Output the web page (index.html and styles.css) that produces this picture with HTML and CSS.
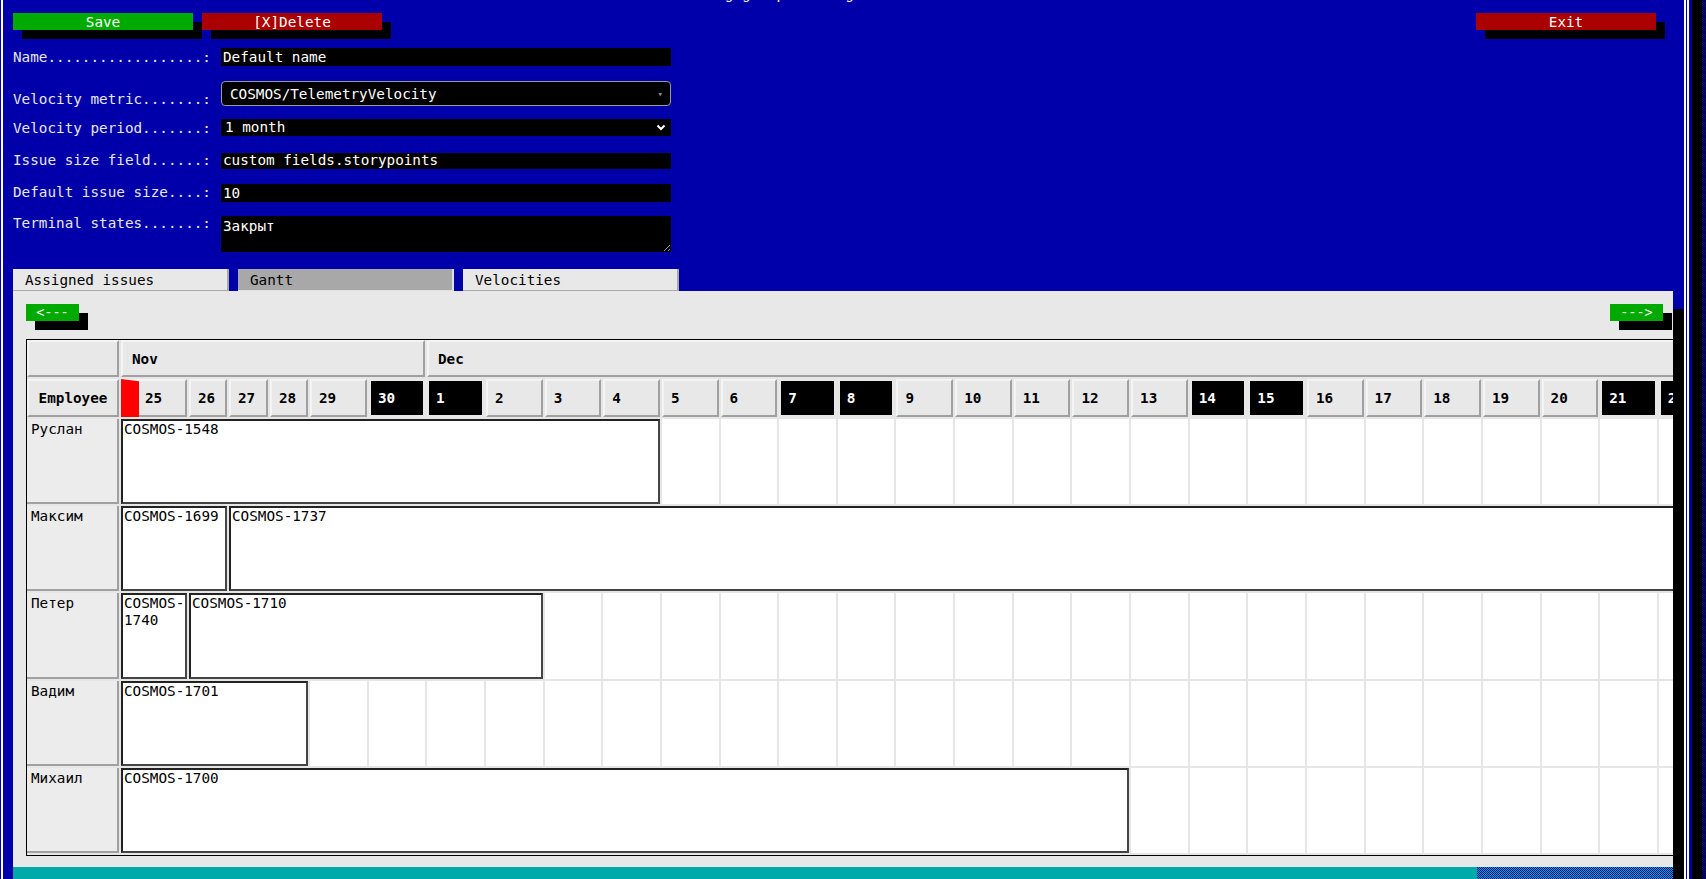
FILE: index.html
```html
<!DOCTYPE html>
<html lang="en">
<head>
<meta charset="utf-8">
<title>Planning group</title>
<link rel="stylesheet" href="styles.css">
</head>
<body>
<div class="desktop">
  <div class="window">
    <div class="frame">
      <div class="title">Planning group settings</div>
      <div class="toolbar">
        <button class="btn btn-green">Save</button>
        <button class="btn btn-red">[X]Delete</button>
        <button class="btn btn-red btn-exit">Exit</button>
      </div>
      <div class="form">
        <div class="field field-name">
          <label class="label">Name..................:</label>
          <input class="input" value="Default name">
        </div>
        <div class="field field-metric">
          <label class="label">Velocity metric.......:</label>
          <div class="select select-metric"><span>COSMOS/TelemetryVelocity</span><span class="tri">&#9662;</span></div>
        </div>
        <div class="field field-period">
          <label class="label">Velocity period.......:</label>
          <div class="select select-period"><span>1 month</span>
            <svg class="chev" width="10" height="7" viewBox="0 0 10 7"><path d="M1.5 1.5 L5 5 L8.5 1.5" fill="none" stroke="#fff" stroke-width="2"/></svg>
          </div>
        </div>
        <div class="field field-size">
          <label class="label">Issue size field......:</label>
          <input class="input input-size" value="custom fields.storypoints">
        </div>
        <div class="field field-default">
          <label class="label">Default issue size....:</label>
          <input class="input" value="10">
        </div>
        <div class="field field-terminal">
          <label class="label">Terminal states.......:</label>
          <textarea class="textarea">Закрыт</textarea>
        </div>
      </div>
      <div class="tabs">
        <div class="tab">Assigned issues</div>
        <div class="tab tab-active">Gantt</div>
        <div class="tab">Velocities</div>
      </div>
      <div class="panel">
        <div class="navrow">
          <button class="nav">&lt;---</button>
          <button class="nav">---&gt;</button>
        </div>
        <div class="gantt">
          <div class="th th-corner"></div>
          <div class="th month month-nov">Nov</div>
          <div class="th month month-dec">Dec</div>

          <div class="th th-emp">Employee</div>
          <div class="th day today"><span class="marker"></span><span class="num">25</span></div>
          <div class="th day">26</div>
          <div class="th day">27</div>
          <div class="th day">28</div>
          <div class="th day">29</div>
          <div class="th day wk">30</div>
          <div class="th day wk">1</div>
          <div class="th day">2</div>
          <div class="th day">3</div>
          <div class="th day">4</div>
          <div class="th day">5</div>
          <div class="th day">6</div>
          <div class="th day wk">7</div>
          <div class="th day wk">8</div>
          <div class="th day">9</div>
          <div class="th day">10</div>
          <div class="th day">11</div>
          <div class="th day">12</div>
          <div class="th day">13</div>
          <div class="th day wk">14</div>
          <div class="th day wk">15</div>
          <div class="th day">16</div>
          <div class="th day">17</div>
          <div class="th day">18</div>
          <div class="th day">19</div>
          <div class="th day">20</div>
          <div class="th day wk">21</div>
          <div class="th day wk">22</div>
          <div class="th day">23</div>
          <div class="th day">24</div>

          <div class="name">Руслан</div>
          <div class="task" style="grid-column: span 10">COSMOS-1548</div>
          <i class="cell"></i><i class="cell"></i><i class="cell"></i><i class="cell"></i><i class="cell"></i>
          <i class="cell"></i><i class="cell"></i><i class="cell"></i><i class="cell"></i><i class="cell"></i>
          <i class="cell"></i><i class="cell"></i><i class="cell"></i><i class="cell"></i><i class="cell"></i>
          <i class="cell"></i><i class="cell"></i><i class="cell"></i><i class="cell"></i><i class="cell"></i>

          <div class="name">Максим</div>
          <div class="task" style="grid-column: span 2">COSMOS-1699</div>
          <div class="task" style="grid-column: span 28">COSMOS-1737</div>

          <div class="name">Петер</div>
          <div class="task" style="grid-column: span 1">COSMOS-<wbr>1740</div>
          <div class="task" style="grid-column: span 7">COSMOS-1710</div>
          <i class="cell"></i><i class="cell"></i><i class="cell"></i><i class="cell"></i><i class="cell"></i>
          <i class="cell"></i><i class="cell"></i><i class="cell"></i><i class="cell"></i><i class="cell"></i>
          <i class="cell"></i><i class="cell"></i><i class="cell"></i><i class="cell"></i><i class="cell"></i>
          <i class="cell"></i><i class="cell"></i><i class="cell"></i><i class="cell"></i><i class="cell"></i>
          <i class="cell"></i><i class="cell"></i>

          <div class="name">Вадим</div>
          <div class="task" style="grid-column: span 4">COSMOS-1701</div>
          <i class="cell"></i><i class="cell"></i><i class="cell"></i><i class="cell"></i><i class="cell"></i>
          <i class="cell"></i><i class="cell"></i><i class="cell"></i><i class="cell"></i><i class="cell"></i>
          <i class="cell"></i><i class="cell"></i><i class="cell"></i><i class="cell"></i><i class="cell"></i>
          <i class="cell"></i><i class="cell"></i><i class="cell"></i><i class="cell"></i><i class="cell"></i>
          <i class="cell"></i><i class="cell"></i><i class="cell"></i><i class="cell"></i><i class="cell"></i>
          <i class="cell"></i>

          <div class="name">Михаил</div>
          <div class="task" style="grid-column: span 18">COSMOS-1700</div>
          <i class="cell"></i><i class="cell"></i><i class="cell"></i><i class="cell"></i><i class="cell"></i>
          <i class="cell"></i><i class="cell"></i><i class="cell"></i><i class="cell"></i><i class="cell"></i>
          <i class="cell"></i><i class="cell"></i>
        </div>
        <div class="hscroll"><div class="thumb"></div></div>
      </div>
    </div>
  </div>
</div>
</body>
</html>
```

FILE: styles.css
```css
html, body {
  margin: 0;
  padding: 0;
}
body {
  width: 1706px;
  height: 879px;
  overflow: hidden;
  background-color: #000;
  background-image: repeating-conic-gradient(#0000aa 0 25%, #000 0 50%);
  background-size: 2px 2px;
  font-family: "DejaVu Sans Mono", "Liberation Mono", monospace;
  font-size: 14.3px;
  line-height: 17px;
}
.desktop {
  display: flex;
  height: 879px;
  overflow: hidden;
}
.window {
  flex: none;
  width: 1697px;
  height: 930px;
  margin-left: -5px;
  margin-top: -11px;
  padding: 3px;
  box-sizing: border-box;
  background: #0000aa;
  box-shadow: 10px 10px 0 #000;
}
.frame {
  position: relative;
  height: 100%;
  box-sizing: border-box;
  border: 5px double #fff;
  padding: 0 11px 0 10px;
  display: flex;
  flex-direction: column;
}
.title {
  position: absolute;
  top: -11px;
  left: 0;
  right: 0;
  margin: 0 auto;
  width: max-content;
  padding: 0 8px;
  background: #0000aa;
  color: #fff;
  transform: translateX(-80px);
}
.toolbar {
  display: flex;
  margin-top: 16px;
  gap: 9px;
}
.btn {
  width: 180px;
  height: 17px;
  padding: 1px 0 0;
  border: 0;
  font: inherit;
  line-height: 17px;
  color: #fff;
  box-shadow: 9px 9px 0 #000;
}
.btn-green { background: #00aa00; }
.btn-red { background: #aa0000; }
.btn-exit {
  margin-left: auto;
  margin-right: 17px;
}
.form {
  display: flex;
  flex-direction: column;
}
.field {
  display: flex;
}
.label {
  width: 208px;
  flex: none;
  color: #e8e8e8;
  white-space: pre;
}
.input, .textarea {
  width: 450px;
  box-sizing: border-box;
  border: 0;
  margin: 0;
  background: #000;
  color: #fff;
  font: inherit;
  line-height: 17px;
  padding: 0 2px;
  outline: none;
}
.field-name { margin-top: 18px; align-items: center; }
.field-name .input { height: 18px; }
.field-metric { margin-top: 15px; align-items: flex-end; }
.field-metric .label { margin-bottom: -2px; }
.field-period { margin-top: 13px; align-items: center; }
.field-period .label {
  height: 17px;
  box-sizing: border-box;
  padding-top: 1px;
}
.field-size { margin-top: 16px; align-items: center; }
.field-size .input { height: 16px; }
.field-default { margin-top: 15px; align-items: center; }
.field-default .input { height: 18px; }
.field-default .label { margin-top: -1px; }
.field-terminal { margin-top: 14px; align-items: flex-start; }
.field-terminal .label { margin-top: -1px; }
.textarea {
  height: 36px;
  padding: 2px 2px;
  resize: vertical;
}
.select {
  width: 450px;
  box-sizing: border-box;
  display: flex;
  align-items: center;
  justify-content: space-between;
  background: #000;
  color: #fff;
}
.select-metric {
  height: 25px;
  border: 1px solid #9a9a9a;
  border-radius: 4px;
  padding: 1px 7px 0 8px;
}
.select-metric .tri {
  color: #8a8a8a;
  font-size: 9px;
  line-height: 9px;
}
.select-period {
  height: 17px;
  padding: 0 5px 0 4px;
}
.chev { display: block; }
.tabs {
  display: flex;
  gap: 9px;
  margin-top: 17px;
}
.tab {
  width: 216px;
  height: 22px;
  box-sizing: border-box;
  padding: 3px 0 0 12px;
  background: #e8e8e8;
  color: #000;
  border-right: 2px solid #a8a8a8;
  border-bottom: 1px solid #a8a8a8;
}
.tab-active {
  background: #a8a8a8;
  border-right-color: #e0e0e0;
  border-bottom-color: #e0e0e0;
}
.panel {
  flex: 1;
  background: #e8e8e8;
  overflow: hidden;
  box-shadow: 11px 18px 0 #000;
  display: flex;
  flex-direction: column;
}
.navrow {
  display: flex;
  justify-content: space-between;
  padding: 13px 10px 0 13px;
}
.nav {
  width: 53px;
  height: 17px;
  padding: 0;
  border: 0;
  background: #00aa00;
  color: #fff;
  font-family: "DejaVu Sans Mono", monospace;
  font-size: 13.5px;
  line-height: 17px;
  box-shadow: 9px 9px 0 #000;
}
.gantt {
  align-self: flex-start;
  margin: 18px 0 0 13px;
  border: 1px solid #000;
  padding-bottom: 2px;
  display: grid;
  grid-template-columns: 92px 66px 38px 39px 38px 57px 56px 57px repeat(23, 56.65px);
  grid-template-rows: 37px 38px repeat(5, 85.2px);
  gap: 2px;
  background: #e6e6e6;
  flex: none;
}
.th {
  box-sizing: border-box;
  background: #e8e8e8;
  border: 2px solid;
  border-color: #f4f4f4 #a0a0a0 #a0a0a0 #f4f4f4;
  font-weight: bold;
  display: flex;
  align-items: center;
  padding-left: 9px;
  color: #000;
  overflow: hidden;
  white-space: nowrap;
}
.month { padding-top: 1px; }
.month-nov { grid-column: span 6; }
.month-dec { grid-column: span 24; }
.th-emp {
  justify-content: center;
  padding-left: 0;
}
.day { padding-left: 7px; }
.day.wk {
  background: #000;
  color: #fff;
  border-color: #e8e8e8;
}
.day.today {
  padding-left: 0;
  overflow: visible;
}
.marker {
  align-self: stretch;
  flex: none;
  width: 18px;
  margin: -2px 0 -2px -2px;
  background: #ff0000;
  clip-path: polygon(0 0, 100% 6%, 100% 100%, 0 100%);
}
.today .num { margin-left: 6px; }
.name {
  background: #ececec;
  border-right: 2px solid #a0a0a0;
  border-bottom: 2px solid #a0a0a0;
  box-sizing: border-box;
  padding: 2px 4px;
  color: #000;
}
.cell {
  background: #fff;
}
.task {
  background: #fff;
  border: 2px solid #222;
  border-right-color: #444;
  border-bottom-color: #444;
  box-sizing: border-box;
  padding: 0 1px;
  color: #000;
  overflow: hidden;
}
.hscroll {
  flex: none;
  margin-top: 11px;
  height: 14px;
  display: flex;
  background-image: repeating-conic-gradient(#00aaaa 0 25%, #0000aa 0 50%);
  background-size: 2px 2px;
}
.thumb {
  width: 1464px;
  background: #00aaaa;
}
```
